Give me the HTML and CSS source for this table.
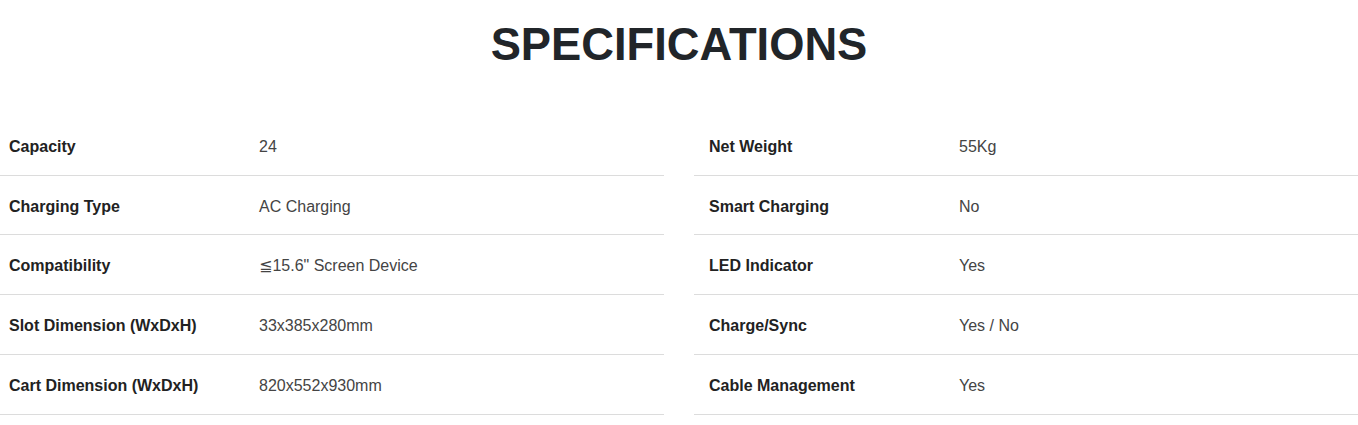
FILE: index.html
```html
<!DOCTYPE html>
<html lang="en">
<head>
<meta charset="utf-8">
<title>Specifications</title>
<link rel="stylesheet" href="styles.css">
</head>
<body>
<section class="specs">
  <h1 class="specs-title">SPECIFICATIONS</h1>
  <div class="specs-grid">
    <table class="spec-table spec-table--left">
      <tbody>
        <tr><th>Capacity</th><td>24</td></tr>
        <tr><th>Charging Type</th><td>AC Charging</td></tr>
        <tr><th>Compatibility</th><td>≦15.6" Screen Device</td></tr>
        <tr><th>Slot Dimension (WxDxH)</th><td>33x385x280mm</td></tr>
        <tr><th>Cart Dimension (WxDxH)</th><td>820x552x930mm</td></tr>
      </tbody>
    </table>
    <table class="spec-table spec-table--right">
      <tbody>
        <tr><th>Net Weight</th><td>55Kg</td></tr>
        <tr><th>Smart Charging</th><td>No</td></tr>
        <tr><th>LED Indicator</th><td>Yes</td></tr>
        <tr><th>Charge/Sync</th><td>Yes / No</td></tr>
        <tr><th>Cable Management</th><td>Yes</td></tr>
      </tbody>
    </table>
  </div>
</section>
</body>
</html>
```
FILE: styles.css
```css
html, body {
  margin: 0;
  padding: 0;
  background: #ffffff;
}

body {
  font-family: "Liberation Sans", Arial, "DejaVu Sans", sans-serif;
  color: #212529;
  overflow: hidden;
}

.specs {
  width: 1358px;
}

.specs-title {
  margin: 18px 0 0;
  height: 97.85px;
  font-size: 45.3px;
  line-height: 53.5px;
  font-weight: 700;
  text-align: center;
  color: #212529;
}

.specs-grid {
  display: grid;
  grid-template-columns: 664px 664px;
  column-gap: 30px;
}

.spec-table {
  width: 100%;
  border-collapse: collapse;
  table-layout: fixed;
}

.spec-table th,
.spec-table td {
  padding: 19px 9px 15.75px;
  font-size: 16px;
  line-height: 24px;
  text-align: left;
  vertical-align: top;
  border-bottom: 1px solid #dcdcdc;
}

.spec-table th {
  width: 250px;
  box-sizing: border-box;
  font-weight: 700;
  color: #222222;
}

.spec-table td {
  font-weight: 400;
  color: #444444;
}

.spec-table--right th,
.spec-table--right td {
  padding-left: 15px;
}
```
